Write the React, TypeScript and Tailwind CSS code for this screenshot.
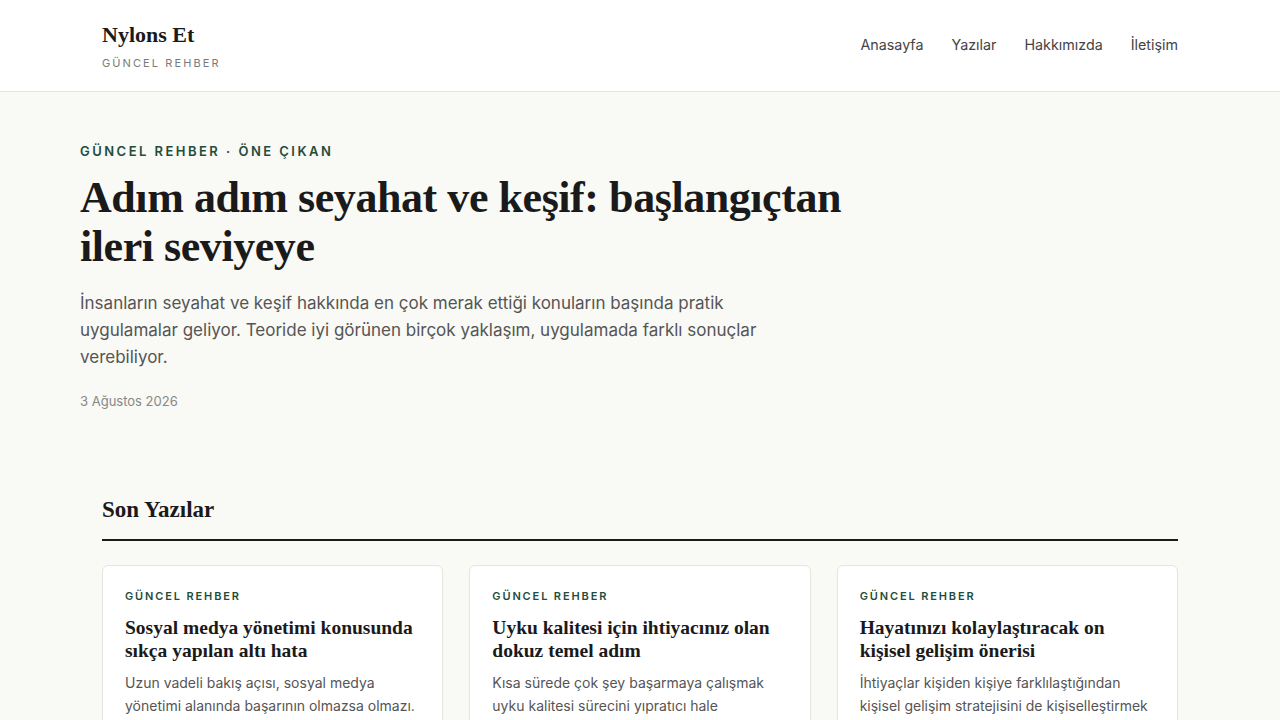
import React from "react";

const serif = { fontFamily: '"Liberation Serif", "DejaVu Serif", serif' };

const posts = [
  {
    title: "Sosyal medya yönetimi konusunda sıkça yapılan altı hata",
    excerpt: "Uzun vadeli bakış açısı, sosyal medya yönetimi alanında başarının olmazsa olmazı. Küçük adımlarla başlamak en doğrusu.",
  },
  {
    title: "Uyku kalitesi için ihtiyacınız olan dokuz temel adım",
    excerpt: "Kısa sürede çok şey başarmaya çalışmak uyku kalitesi sürecini yıpratıcı hale getirebilir. Sabırlı olmak önemli.",
  },
  {
    title: "Hayatınızı kolaylaştıracak on kişisel gelişim önerisi",
    excerpt: "İhtiyaçlar kişiden kişiye farklılaştığından kişisel gelişim stratejisini de kişiselleştirmek gerekiyor.",
  },
];

export default function App() {
  return (
    <div className="min-h-screen bg-[#f9f9f5] text-[#1a1a1a]" style={{ fontFamily: 'Inter, "Liberation Sans", sans-serif' }}>
      <header className="bg-white border-b border-[#e6e6df]">
        <div className="mx-auto w-[1076px] h-[91px] flex items-center justify-between">
          <div className="flex flex-col">
            <div className="text-[22px] font-bold leading-[28px] text-[#1a1a1a]" style={serif}>Nylons Et</div>
            <div className="mt-[7px] text-[11px] leading-[14px] tracking-[0.19em] text-[#7a7a7a]">GÜNCEL REHBER</div>
          </div>
          <nav className="flex items-center gap-[28px] text-[14.3px] text-[#444] pb-[2px]">
            <a>Anasayfa</a>
            <a>Yazılar</a>
            <a>Hakkımızda</a>
            <a>İletişim</a>
          </nav>
        </div>
      </header>

      <section className="mx-auto w-[1120px] pt-[51px] pb-[42px]">
        <div className="text-[13px] font-semibold leading-[16px] tracking-[0.19em] text-[#1f4d3a]">GÜNCEL REHBER · ÖNE ÇIKAN</div>
        <h1 className="mt-[14px] max-w-[800px] text-[44px] font-bold leading-[49px] tracking-[-0.01em] text-[#1a1a1a]" style={serif}>
          Adım adım seyahat ve keşif: başlangıçtan ileri seviyeye
        </h1>
        <p className="mt-[19px] max-w-[690px] text-[17px] leading-[27px] text-[#555]">
          İnsanların seyahat ve keşif hakkında en çok merak ettiği konuların başında pratik uygulamalar geliyor. Teoride iyi görünen birçok yaklaşım, uygulamada farklı sonuçlar verebiliyor.
        </p>
        <div className="mt-[20px] text-[13px] leading-[20px] text-[#888]">3 Ağustos 2026</div>
      </section>

      <section className="mx-auto w-[1076px] pt-[43px]">
        <h2 className="text-[23px] font-bold leading-[28px] pb-[15px] border-b-2 border-[#1a1a1a]" style={serif}>Son Yazılar</h2>
        <div className="mt-[24px] grid grid-cols-3 gap-[26px]">
          {posts.map((p) => (
            <article key={p.title} className="bg-white border border-[#e6e6df] rounded-[6px] pl-[22px] pr-[24px] pt-[22px] pb-[24px]">
              <div className="text-[11px] font-semibold leading-[16px] tracking-[0.17em] text-[#1f4d3a]">GÜNCEL REHBER</div>
              <h3 className="mt-[12px] text-[19.5px] font-bold leading-[23px] text-[#1a1a1a]" style={serif}>{p.title}</h3>
              <p className="mt-[9px] text-[14px] leading-[23px] text-[#555]">{p.excerpt}</p>
            </article>
          ))}
        </div>
      </section>
    </div>
  );
}
